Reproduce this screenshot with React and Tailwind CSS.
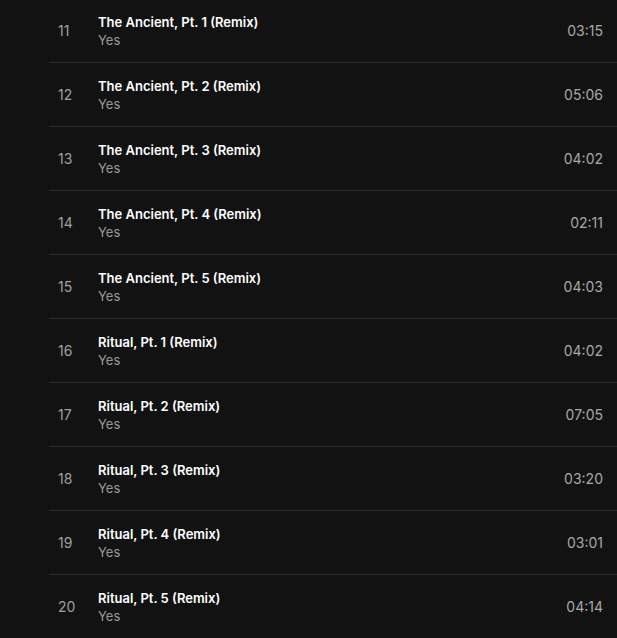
const tracks = [
  { n: 11, title: 'The Ancient, Pt. 1 (Remix)', time: '03:15' },
  { n: 12, title: 'The Ancient, Pt. 2 (Remix)', time: '05:06' },
  { n: 13, title: 'The Ancient, Pt. 3 (Remix)', time: '04:02' },
  { n: 14, title: 'The Ancient, Pt. 4 (Remix)', time: '02:11' },
  { n: 15, title: 'The Ancient, Pt. 5 (Remix)', time: '04:03' },
  { n: 16, title: 'Ritual, Pt. 1 (Remix)', time: '04:02' },
  { n: 17, title: 'Ritual, Pt. 2 (Remix)', time: '07:05' },
  { n: 18, title: 'Ritual, Pt. 3 (Remix)', time: '03:20' },
  { n: 19, title: 'Ritual, Pt. 4 (Remix)', time: '03:01' },
  { n: 20, title: 'Ritual, Pt. 5 (Remix)', time: '04:14' },
];

function TrackRow({ track }) {
  return (
    <div className="flex h-16 items-center border-b border-[#2a2a2a]">
      <div className="w-[49px] pl-[9px] text-[14px] text-[#a0a0a0]">{track.n}</div>
      <div className="flex flex-1 flex-col">
        <span className="text-[13px] font-semibold leading-[18px] text-white">{track.title}</span>
        <span className="text-[13px] leading-[18px] text-[#9a9a9a]">Yes</span>
      </div>
      <div className="pr-[14px] text-[14px] text-[#a8a8a8]">{track.time}</div>
    </div>
  );
}

export default function App() {
  return (
    <div
      className="h-[638px] w-full overflow-hidden bg-[#121212]"
      style={{ fontFamily: 'Inter, "Noto Sans", sans-serif' }}
    >
      <div className="-mt-px ml-[49px]">
        {tracks.map((t) => (
          <TrackRow key={t.n} track={t} />
        ))}
      </div>
    </div>
  );
}
